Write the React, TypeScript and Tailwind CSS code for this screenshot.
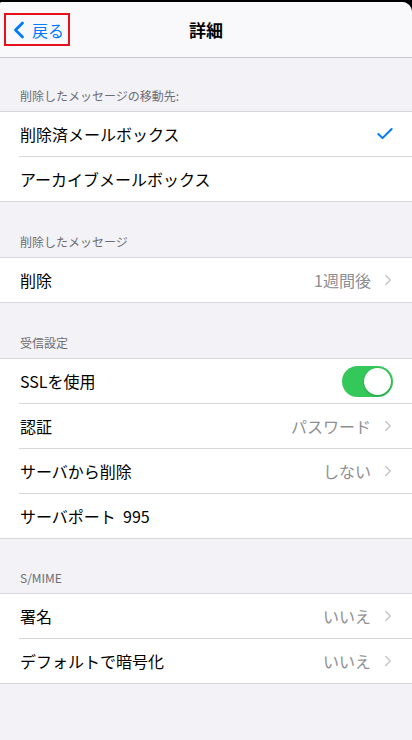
import { ChevronLeft, ChevronRight, Check } from "lucide-react";

const font = { fontFamily: '"Noto Sans CJK JP", "Noto Sans", sans-serif' };

const SectionHeader = ({ title, height }: { title: string; height: string }) => (
  <div className={`flex items-end px-[20px] pb-[6px] text-[12px] text-[#6d6d72] ${height}`}>
    {title}
  </div>
);

type RowProps = {
  label: string;
  value?: string;
  chevron?: boolean;
  checked?: boolean;
  toggle?: boolean;
  last?: boolean;
};

const Row = ({ label, value, chevron, checked, toggle, last }: RowProps) => (
  <div className="pl-[19px] bg-white">
    <div
      className={`flex items-center pr-[19px] ${
        last ? "h-[44px]" : "h-[45px] border-b border-[#d8d8dc]"
      }`}
    >
      <span className="flex-1 text-[16px] text-black pl-[1px] whitespace-pre">{label}</span>
      {value && (
        <span className="text-[16px] text-[#8e8e93] mr-[8px]">{value}</span>
      )}
      {chevron && (
        <ChevronRight size={18} strokeWidth={1.8} className="text-[#c4c4c7] -mr-[4px]" />
      )}
      {checked && (
        <Check size={20} strokeWidth={2.4} className="text-[#007aff] -mr-[2px]" />
      )}
      {toggle && (
        <div className="w-[51px] h-[31px] rounded-full bg-[#34c759] flex items-center justify-end pr-[2px]">
          <div className="w-[27px] h-[27px] rounded-full bg-white shadow-[0_1px_2px_rgba(0,0,0,0.25)]" />
        </div>
      )}
    </div>
  </div>
);

const Group = ({ children }: { children: React.ReactNode }) => (
  <div className="border-y border-[#d8d8dc] bg-white">{children}</div>
);

export default function App() {
  return (
    <div className="w-[412px] h-[740px] bg-black pt-[2px] overflow-hidden" style={font}>
      <div className="h-full bg-[#f2f2f7] rounded-tr-[10px] rounded-tl-[2px] overflow-hidden">
        <header className="relative h-[56px] bg-[#f9f9fb] border-b border-[#c8c8cc] flex items-center justify-center">
          <div className="absolute left-[4px] top-[11px] w-[66px] h-[33px] border-2 border-[#e8101a] flex items-center">
            <ChevronLeft size={28} strokeWidth={2.4} className="text-[#007aff] -ml-[1px]" />
            <span className="text-[16px] text-[#007aff] -ml-[1px]">戻る</span>
          </div>
          <h1 className="text-[17px] font-bold text-black">詳細</h1>
        </header>

        <SectionHeader title="削除したメッセージの移動先:" height="h-[53px]" />
        <Group>
          <Row label="削除済メールボックス" checked />
          <Row label="アーカイブメールボックス" last />
        </Group>

        <SectionHeader title="削除したメッセージ" height="h-[55px]" />
        <Group>
          <Row label="削除" value="1週間後" chevron last />
        </Group>

        <SectionHeader title="受信設定" height="h-[55px]" />
        <Group>
          <Row label="SSLを使用" toggle />
          <Row label="認証" value="パスワード" chevron />
          <Row label="サーバから削除" value="しない" chevron />
          <Row label="サーバポート  995" last />
        </Group>

        <SectionHeader title="S/MIME" height="h-[54px]" />
        <Group>
          <Row label="署名" value="いいえ" chevron />
          <Row label="デフォルトで暗号化" value="いいえ" chevron last />
        </Group>
      </div>
    </div>
  );
}
